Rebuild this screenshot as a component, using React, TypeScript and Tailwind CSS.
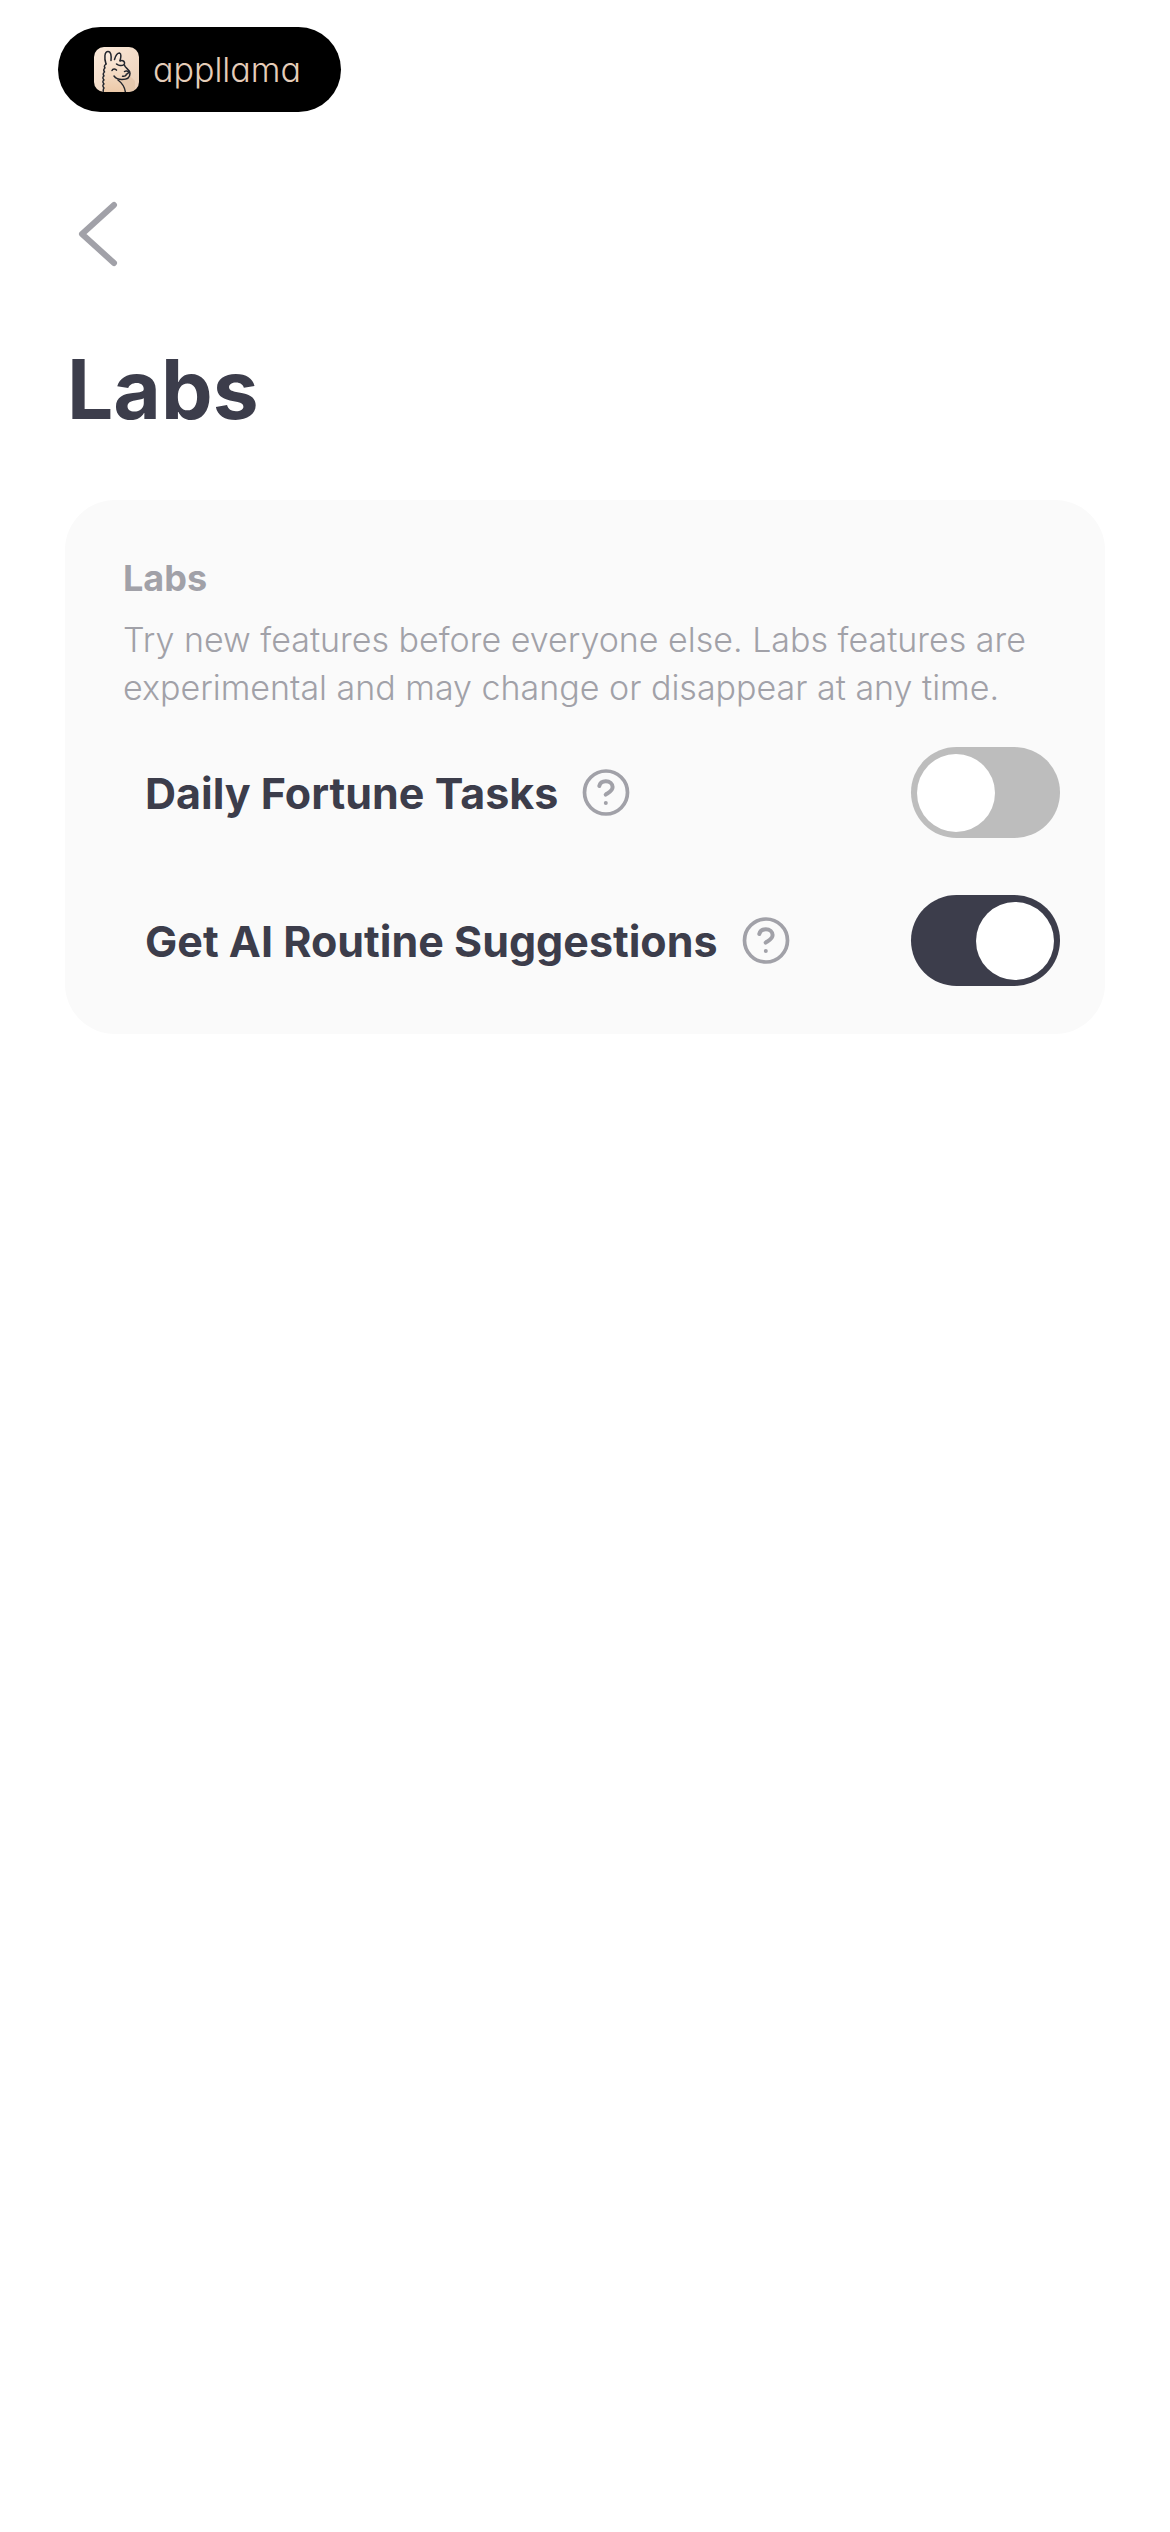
import { useState } from 'react'

const FEATURES = [
  { id: 'daily-fortune', label: 'Daily Fortune Tasks', enabled: false },
  { id: 'ai-routine', label: 'Get AI Routine Suggestions', enabled: true },
]

function LlamaIcon() {
  return (
    <svg viewBox="0 0 45 45" className="size-[45px] shrink-0" fill="none" aria-hidden="true">
      <defs>
        <linearGradient id="tile" x1="0" y1="0" x2="1" y2="1">
          <stop offset="0" stopColor="#fbeadb" />
          <stop offset="1" stopColor="#ecd0b8" />
        </linearGradient>
        <linearGradient id="neck" x1="0" y1="0" x2="0" y2="1">
          <stop offset="0" stopColor="#fceee2" />
          <stop offset="1" stopColor="#ecc9a8" />
        </linearGradient>
        <clipPath id="tile-clip">
          <rect width="45" height="45" rx="10" />
        </clipPath>
      </defs>
      <g clipPath="url(#tile-clip)">
        <rect width="45" height="45" fill="url(#tile)" />
        <path d="M25 33c4-1 8 0 10-5l6 6v11h-9c-1-5-3-9-7-12Z" fill="#dfbd9e" opacity=".55" />
        <path
          d="M12 17C10 11 10 4.5 14 4.5c3 0 3.5 5 3 9.5l4-1c1-4 3-7 5-7c2 1 1 5 0 8l5 4c1 3 5 4 5 8c0 4-3 6-8 6l-4-1c4 4 7 8 7.5 14H10V31Z"
          fill="url(#neck)"
        />
        <g stroke="#22252d" strokeWidth="1.5" strokeLinecap="round" strokeLinejoin="round">
          <path d="M12 17C10 11 10.5 4.5 14 4.5c3 0 3.5 4.5 3 9" />
          <path d="M20.5 12.5c1-3.5 3-6.5 5-6.5c2 .5 1.5 4.5.5 7.5" />
          <path d="M26 14c2-1 4 0 4.5 1.5c.5 2-1.5 3.5-4.5 3c-1.5 0-2.5-.8-3.5-1.5" />
          <path d="M12 17c-1.5 1-2 2.5-1 4c-1.5 1-1.5 2.5-.5 4c-1.5 1-1.5 2.5-.5 4c-1.5 1-1.5 2.5 0 4c-1.5 1-1.5 2.5 0 4c-1.5 1-1.5 2.5 0 4c-1 1-1 2.5-.5 5" />
          <path d="M30.5 18c0 3 5.5 4 5.5 8.5c0 4-3.5 6-8 6c-3.500 0-6-.8-8-3.5" />
          <path d="M30.5 24.5c1.5-1 3.5-.5 4 .5c0 1.2-1.2 2-2.200 2.2m0 0c.2 1.5-1.8 2.5-3.800 2" />
          <path d="M18 23.5c.8-2 3.5-2.2 4.5-.3" />
          <path d="M24 33c4 3 7 7 7.5 13" />
        </g>
      </g>
    </svg>
  )
}

function HelpIcon() {
  return (
    <svg viewBox="0 0 48 48" className="size-12" fill="none" aria-hidden="true">
      <circle cx="24" cy="23.5" r="21.5" stroke="currentColor" strokeWidth="3.7" />
      <path
        d="M17.3 17C18 14 20.6 12.2 23.8 12.2c4 0 6.8 2.6 6.8 5.9c0 4.2-4 5.6-6.9 7.5"
        stroke="currentColor"
        strokeWidth="4"
        strokeLinecap="round"
        strokeLinejoin="round"
      />
      <circle cx="23.8" cy="34" r="2" fill="currentColor" />
    </svg>
  )
}

type FeatureRowProps = {
  id: string
  label: string
  checked: boolean
  onChange: (checked: boolean) => void
}

function FeatureRow({ id, label, checked, onChange }: FeatureRowProps) {
  return (
    <div className="flex items-center gap-6">
      <label htmlFor={id} className="text-[43px] leading-[46px] font-bold text-[#3c3d4b]">
        {label}
      </label>
      <button type="button" aria-label={`About ${label}`} className="text-[#a1a1a8]">
        <HelpIcon />
      </button>
      <input
        id={id}
        type="checkbox"
        role="switch"
        checked={checked}
        onChange={e => onChange(e.target.checked)}
        className="ml-auto flex h-[91px] w-[149px] shrink-0 appearance-none items-center rounded-full bg-[#bdbdbd] px-1.5 before:size-[78px] before:rounded-full before:bg-white checked:justify-end checked:bg-[#3c3d4b]"
      />
    </div>
  )
}

export default function App() {
  const [features, setFeatures] = useState(FEATURES)

  function toggle(id: string, enabled: boolean) {
    setFeatures(features.map(f => (f.id === id ? { ...f, enabled } : f)))
  }

  return (
    <div className="min-h-screen bg-white pt-[27px] font-['Inter',sans-serif]">
      <div className="ml-[58px] flex h-[85px] w-fit items-center gap-3.5 rounded-full bg-black pr-10 pl-9 text-[#e5cdb9]">
        <LlamaIcon />
        <span className="text-[34px] leading-[44px] font-light [font-feature-settings:'cv11']">appllama</span>
      </div>

      <main className="px-[65px] pt-[82px]">
        <button type="button" aria-label="Back" className="block px-2.5 text-[#a1a1a8]">
          <svg viewBox="0 0 48 80" className="h-20 w-12" fill="none" aria-hidden="true">
            <path
              d="M39 11L7 40l32 29"
              stroke="currentColor"
              strokeWidth="6"
              strokeLinecap="round"
              strokeLinejoin="round"
            />
          </svg>
        </button>
        <h1 className="mt-[68px] pl-0.5 text-[82px] leading-[96px] font-bold text-[#3c3d4b]">Labs</h1>

        <section className="mt-[62px] rounded-[50px] bg-[#fafafa] pt-[58px] pr-[45px] pb-12 pl-[58px]">
          <h2 className="text-[36px] leading-10 font-bold text-[#a1a1a8]">Labs</h2>
          <p className="mt-[18px] text-[34px] leading-[48px] font-light text-[#a1a1a8]">
            Try new features before everyone else. Labs features are experimental and may change or disappear at any
            time.
          </p>
          <div className="mt-[35px] flex flex-col gap-[57px] pl-[22px]">
            {features.map(f => (
              <FeatureRow
                key={f.id}
                id={f.id}
                label={f.label}
                checked={f.enabled}
                onChange={enabled => toggle(f.id, enabled)}
              />
            ))}
          </div>
        </section>
      </main>
    </div>
  )
}
